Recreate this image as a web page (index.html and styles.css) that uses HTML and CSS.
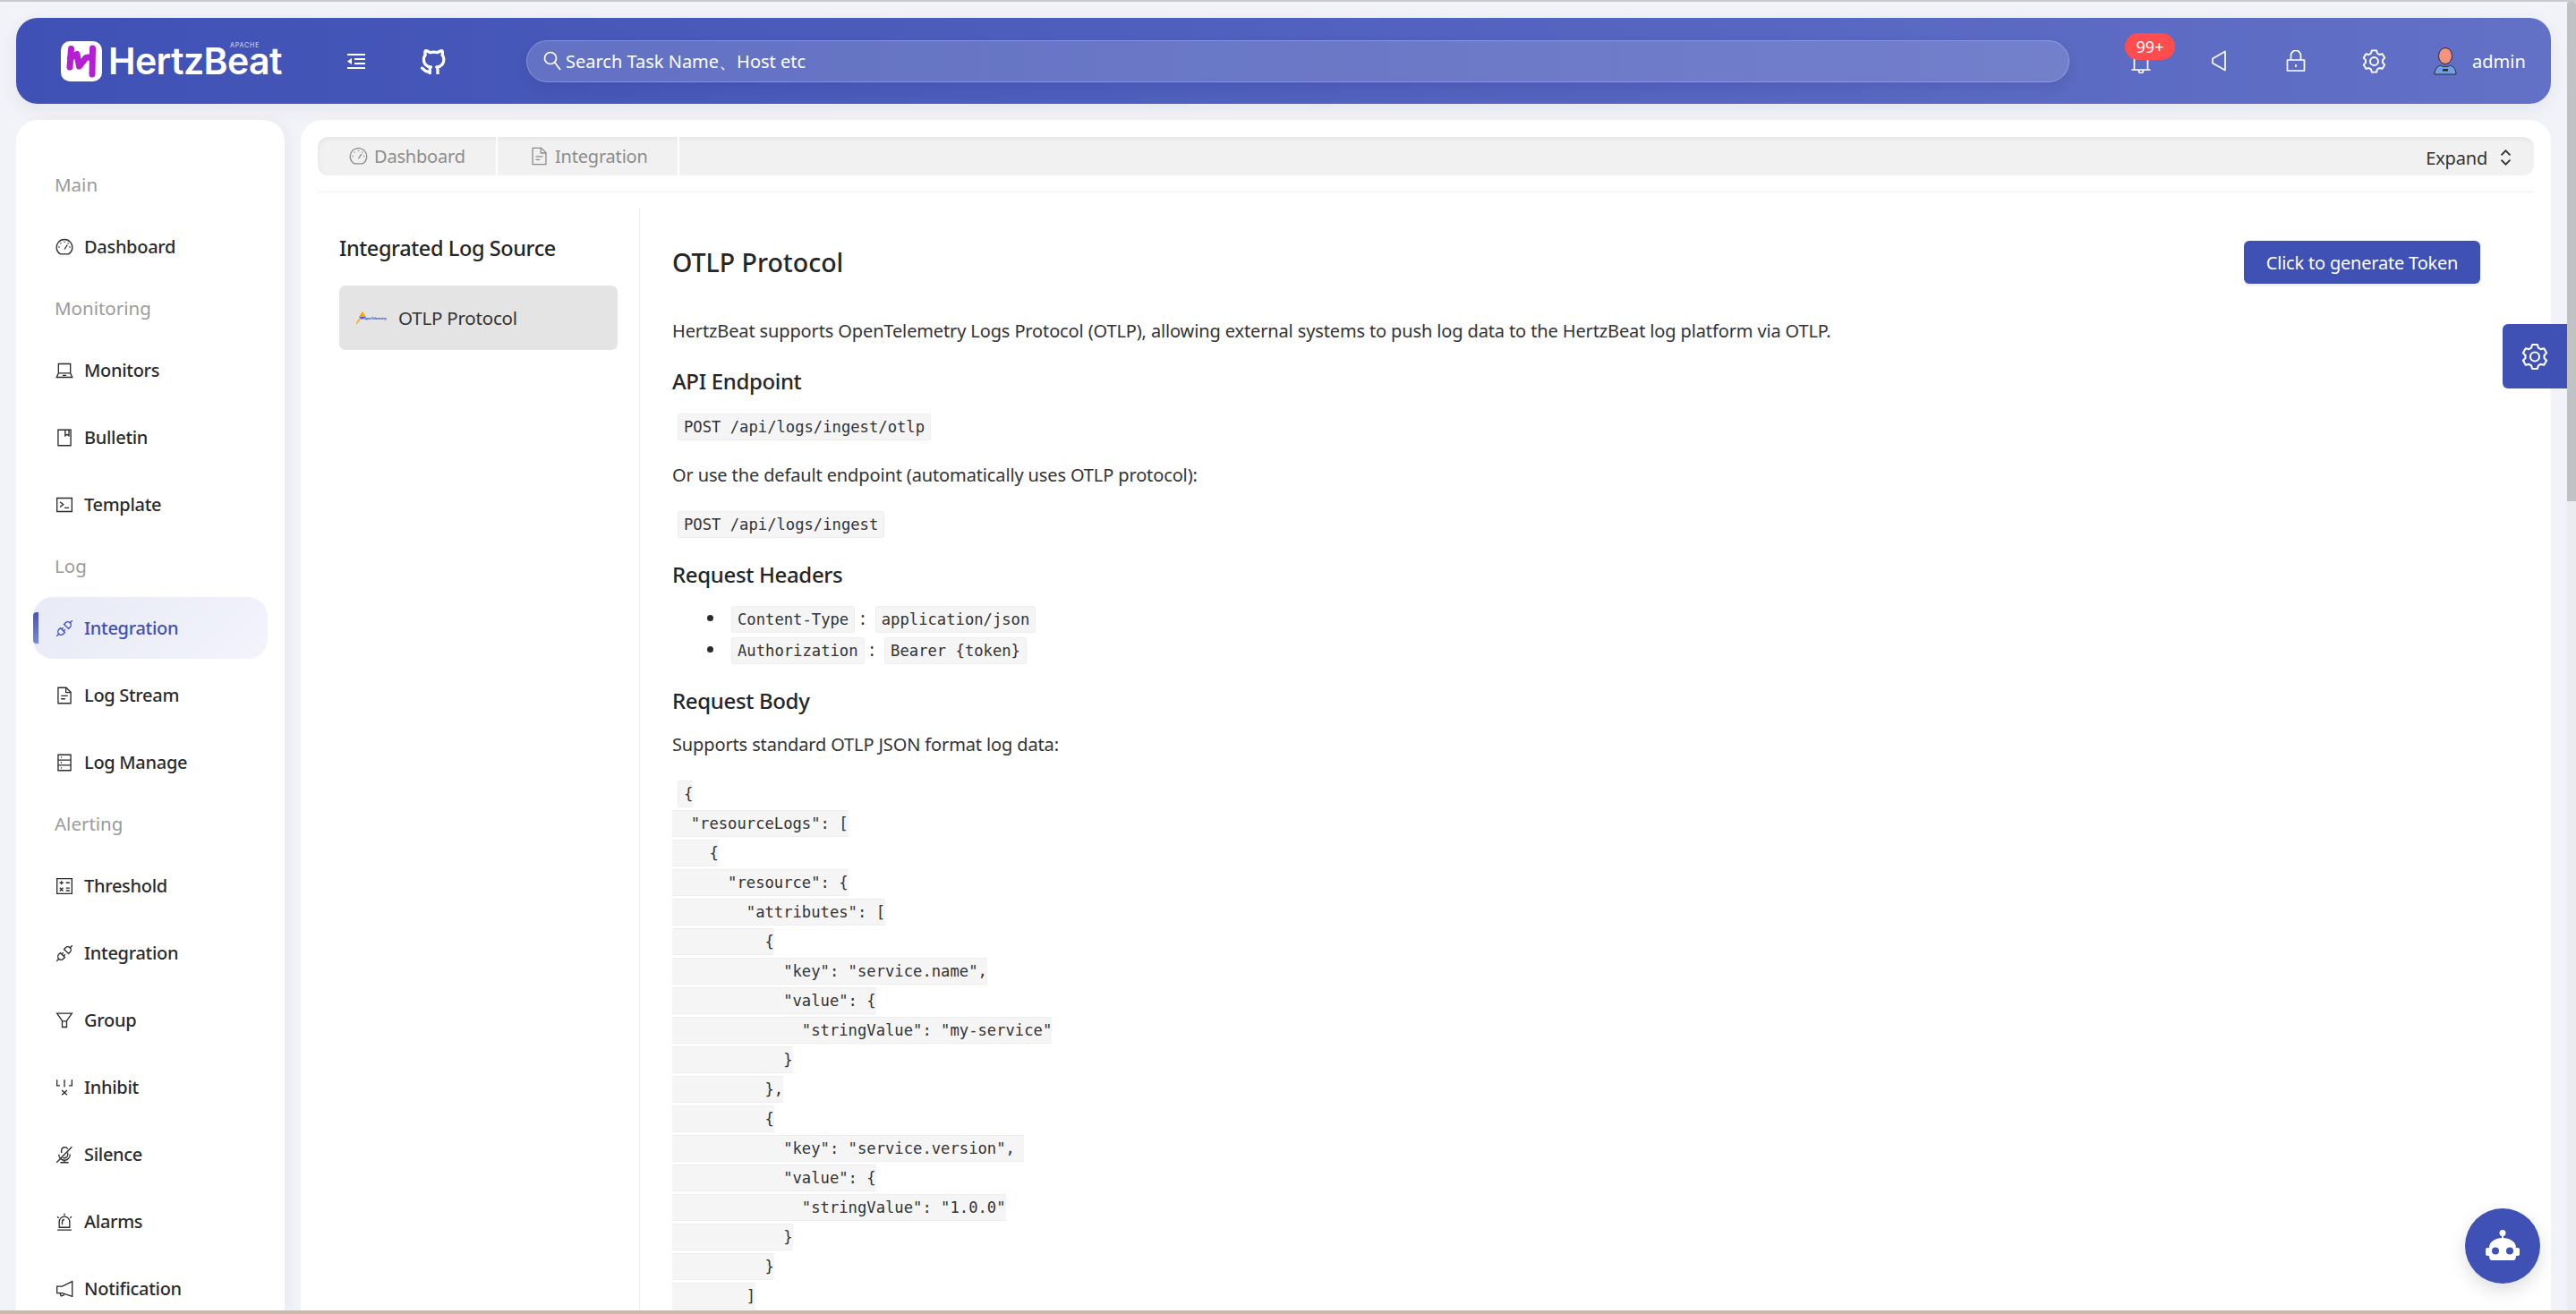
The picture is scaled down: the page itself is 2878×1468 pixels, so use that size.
FILE: index.html
```html
<!DOCTYPE html>
<html lang="en">
<head>
<meta charset="utf-8">
<title>HertzBeat</title>
<link rel="stylesheet" href="styles.css">
</head>
<body>
<svg class="sprite" xmlns="http://www.w3.org/2000/svg">
  <symbol id="i-dash" viewBox="0 0 24 24"><path d="M6.6 21.5A10.6 10.6 0 1 1 17.4 21.5Z"/><path d="M12 15l4-6M12 4.5v1.5M6.6 6.5l1 1M17.4 6.5l-1 1M4 12h1.5M20 12h-1.5"/></symbol>
  <symbol id="i-laptop" viewBox="0 0 24 24"><path d="M4 15.5V3h16v12.500M4 15.500h16l2.500 5.500H1.500z"/><path d="M9.500 18.500h5"/></symbol>
  <symbol id="i-book" viewBox="0 0 24 24"><path d="M3.500 1.500h17v21h-17z"/><path d="M13 1.500v8l2.500-2 2.500 2v-8"/></symbol>
  <symbol id="i-code" viewBox="0 0 24 24"><path d="M2 3h20v18H2z"/><path d="M6 8l4.500 3.500L6 15M12 16h6"/></symbol>
  <symbol id="i-plug" viewBox="0 0 24 24"><path d="M1.500 22.500l3.500-3.500M22.500 1.500L19 5"/><path d="M6.500 11.500l6 6-2 2a4.200 4.200 0 0 1-6-6z"/><path d="M11.500 6.500l6 6 2-2a4.200 4.200 0 0 0-6-6z"/><path d="M8.500 13l2-2M11 15.500l2-2"/></symbol>
  <symbol id="i-file" viewBox="0 0 24 24"><path d="M3.500 1.500h11l6 6v15h-17z"/><path d="M14 1.500v6.500h6.500M7.500 12.500h9M7.500 16.500h5.500"/></symbol>
  <symbol id="i-hdd" viewBox="0 0 24 24"><path d="M3.500 1.500h17v21h-17zM3.500 8.500h17M3.500 15.500h17"/><path d="M7 5h1.500M7 12h1.500M7 19h1.500"/></symbol>
  <symbol id="i-calc" viewBox="0 0 24 24"><path d="M2 2h20v20H2z"/><path d="M5.500 7.500h5M8 5v5M14 7.500h5M5.800 14l4.400 4.500M10.200 14l-4.400 4.500M14 14.500h5M14 18h5"/></symbol>
  <symbol id="i-funnel" viewBox="0 0 24 24"><path d="M2 2.500h20l-7 10v8.500H9v-8.500zM9 13h6"/></symbol>
  <symbol id="i-split" viewBox="0 0 24 24"><path d="M2 1.500v8h4M12 1.500v10M22 1.500v8h-4M8.500 15.500l7 6.500M15.500 15.500l-7 6.500"/></symbol>
  <symbol id="i-mute" viewBox="0 0 24 24"><path d="M8 9.500V6a4.500 4.500 0 0 1 8.500-1.500M16.500 9v3a4.500 4.500 0 0 1-6.500 4"/><path d="M4.500 11.500A7.500 7.500 0 0 0 12 19.500a7.500 7.500 0 0 0 7.500-8M12 19.500v3M6.500 22.500h11M1.500 22.500L22 1.500"/></symbol>
  <symbol id="i-alert" viewBox="0 0 24 24"><path d="M5 19.500V12a7 7 0 0 1 14 0v7.500zM2.500 23h19"/><path d="M12 1v2.500M2.500 5l2 1.800M21.500 5l-2 1.800M9 16v-4a3 3 0 0 1 3-3"/></symbol>
  <symbol id="i-notify" viewBox="0 0 24 24"><path d="M22.500 2v20L9 17.500H2v-9h7z"/><path d="M6 17.500l1.500 4 4.500-1.500"/></symbol>
  <symbol id="i-sound" viewBox="0 0 24 24"><path d="M19 1.500v21L5 14.500v-5z"/></symbol>
  <symbol id="i-lock" viewBox="0 0 24 24"><path d="M2.500 11h19v12h-19zM6.500 11V6a5.500 5.500 0 0 1 11 0v5"/><path d="M12 16v3"/></symbol>
  <symbol id="i-bell" viewBox="0 0 24 24"><path d="M4.500 20V8a7.500 7.500 0 0 1 15 0v12M1.500 20h21M9.500 20v1a2.500 2.500 0 0 0 5 0v-1"/></symbol>
  <symbol id="i-gear" viewBox="0 0 24 24"><polygon points="8.810,4.120 9.710,1.240 14.290,1.240 15.190,4.120 17.230,5.300 20.170,4.640 22.460,8.600 20.420,10.820 20.420,13.180 22.460,15.400 20.170,19.360 17.230,18.700 15.190,19.880 14.290,22.760 9.710,22.760 8.810,19.880 6.770,18.700 3.830,19.360 1.540,15.400 3.580,13.180 3.580,10.820 1.540,8.600 3.830,4.640 6.770,5.300"/><circle cx="12" cy="12" r="4"/></symbol>
</svg>

<div class="topline"></div>
<div class="window">
  <div class="app">
    <header class="header">
      <div class="brand">
        <svg class="logo-mark" viewBox="0 0 46 45"><rect width="46" height="45" rx="10" fill="#fff"/><path d="M11.500 8.500L10 29M10.500 19L18 14.500L20.500 28L28 18.500L35 17.500M35.500 8L35 37" fill="none" stroke="#b51fd4" stroke-width="7" stroke-linecap="round" stroke-linejoin="round"/></svg>
        <div class="logo-text"><span class="logo-apache">APACHE</span><span class="logo-name">HertzBeat</span></div>
      </div>
      <svg class="h-collapse" viewBox="0 0 20 17"><path d="M0 1h20M8 6h12M8 11h12M0 16h20" fill="none" stroke="#fff" stroke-width="1.800"/><path d="M5 5v7L0 8.500z" fill="#fff"/></svg>
      <svg class="h-github" viewBox="0 0 24 24"><path d="M9 21.500c-5 1.500-5-2.500-7-3m14 5.500v-3.870a3.370 3.370 0 0 0-.94-2.610c3.140-.35 6.440-1.540 6.440-7A5.440 5.440 0 0 0 20 6.770 5.070 5.070 0 0 0 19.910 3S18.730 2.650 16 4.480a13.380 13.380 0 0 0-7 0C6.270 2.650 5.090 3 5.090 3A5.070 5.070 0 0 0 5 6.770a5.440 5.440 0 0 0-1.500 3.780c0 5.420 3.300 6.610 6.440 7A3.370 3.370 0 0 0 9 20.130V24"/></svg>
      <div class="search">
        <svg class="search-ico" viewBox="0 0 20 24"><circle cx="8" cy="9" r="6.500"/><path d="M13 14l6 8"/></svg>
        <span class="search-text">Search Task Name、Host etc</span>
      </div>
      <div class="h-actions">
        <div class="h-bell">
          <svg class="h-ico bell-ico"><use href="#i-bell"/></svg>
          <span class="badge">99+</span>
        </div>
        <svg class="h-ico sound-ico"><use href="#i-sound"/></svg>
        <svg class="h-ico lock-ico"><use href="#i-lock"/></svg>
        <svg class="h-ico gear-ico"><use href="#i-gear"/></svg>
        <div class="user">
          <svg class="avatar" viewBox="0 0 26 31"><path d="M1 30c0-6 3-9 7-10 1 2 9 2 10 0 4 1 7 4 7 10z" fill="#6f9fe8" stroke="#2b2b2b"/><ellipse cx="13" cy="9.500" rx="7.500" ry="9" fill="#f6937f" stroke="#2b2b2b"/><rect x="10" y="24" width="6" height="2.500" fill="#2b2b2b"/></svg>
          <span class="user-name">admin</span>
        </div>
      </div>
    </header>

    <div class="body-row">
      <nav class="sidebar">
        <div class="nav-label">Main</div>
        <a class="nav-item"><svg class="nav-ico"><use href="#i-dash"/></svg><span>Dashboard</span></a>
        <div class="nav-label">Monitoring</div>
        <a class="nav-item"><svg class="nav-ico"><use href="#i-laptop"/></svg><span>Monitors</span></a>
        <a class="nav-item"><svg class="nav-ico"><use href="#i-book"/></svg><span>Bulletin</span></a>
        <a class="nav-item"><svg class="nav-ico"><use href="#i-code"/></svg><span>Template</span></a>
        <div class="nav-label">Log</div>
        <a class="nav-item active"><svg class="nav-ico"><use href="#i-plug"/></svg><span>Integration</span></a>
        <a class="nav-item"><svg class="nav-ico"><use href="#i-file"/></svg><span>Log Stream</span></a>
        <a class="nav-item"><svg class="nav-ico"><use href="#i-hdd"/></svg><span>Log Manage</span></a>
        <div class="nav-label">Alerting</div>
        <a class="nav-item"><svg class="nav-ico"><use href="#i-calc"/></svg><span>Threshold</span></a>
        <a class="nav-item"><svg class="nav-ico"><use href="#i-plug"/></svg><span>Integration</span></a>
        <a class="nav-item"><svg class="nav-ico"><use href="#i-funnel"/></svg><span>Group</span></a>
        <a class="nav-item"><svg class="nav-ico"><use href="#i-split"/></svg><span>Inhibit</span></a>
        <a class="nav-item"><svg class="nav-ico"><use href="#i-mute"/></svg><span>Silence</span></a>
        <a class="nav-item"><svg class="nav-ico"><use href="#i-alert"/></svg><span>Alarms</span></a>
        <a class="nav-item"><svg class="nav-ico"><use href="#i-notify"/></svg><span>Notification</span></a>
      </nav>

      <main class="panel">
        <div class="tabs-wrap">
          <div class="tabs">
            <div class="tab tab-a"><svg class="tab-ico"><use href="#i-dash"/></svg><span>Dashboard</span></div>
            <div class="tab tab-b"><svg class="tab-ico"><use href="#i-file"/></svg><span>Integration</span></div>
            <div class="expand"><span>Expand</span><svg class="expand-ico" viewBox="0 0 14 20"><path d="M1.500 7L7 1.500 12.500 7M1.500 13L7 18.500 12.500 13"/></svg></div>
          </div>
        </div>
        <div class="columns">
          <aside class="sources">
            <h3 class="sources-title">Integrated Log Source</h3>
            <div class="source-item">
              <svg class="otel" viewBox="0 0 34 14"><path d="M7 0l4 6H3z" fill="#f5a800"/><path d="M3 6h8l-5 3z" fill="#4f5fd0"/><path d="M4 8L0 14" stroke="#f5a800" stroke-width="1.500"/><text x="8" y="9" class="otel-text">OpenTelemetry</text></svg>
              <span>OTLP Protocol</span>
            </div>
          </aside>
          <article class="doc">
            <div class="doc-head">
              <h2 class="doc-title">OTLP Protocol</h2>
              <button class="token-btn">Click to generate Token</button>
            </div>
            <p class="lead">HertzBeat supports OpenTelemetry Logs Protocol (OTLP), allowing external systems to push log data to the HertzBeat log platform via OTLP.</p>
            <h4 class="sub sub-api">API Endpoint</h4>
            <p class="code-line code-1"><code>POST /api/logs/ingest/otlp</code></p>
            <p class="plain plain-or">Or use the default endpoint (automatically uses OTLP protocol):</p>
            <p class="code-line code-2"><code>POST /api/logs/ingest</code></p>
            <h4 class="sub sub-headers">Request Headers</h4>
            <ul class="headers">
              <li><code>Content-Type</code>: <code>application/json</code></li>
              <li><code>Authorization</code>: <code>Bearer {token}</code></li>
            </ul>
            <h4 class="sub sub-body">Request Body</h4>
            <p class="plain plain-body">Supports standard OTLP JSON format log data:</p>
<pre class="json"><code>{
  "resourceLogs": [
    {
      "resource": {
        "attributes": [
          {
            "key": "service.name",
            "value": {
              "stringValue": "my-service"
            }
          },
          {
            "key": "service.version", 
            "value": {
              "stringValue": "1.0.0"
            }
          }
        ]
 </code></pre>
          </article>
        </div>
      </main>
    </div>

    <button class="float-settings"><svg class="float-gear"><use href="#i-gear"/></svg></button>
    <button class="fab">
      <svg class="fab-ico" viewBox="0 0 40 38"><circle cx="20" cy="4.500" r="3.500" fill="#fff"/><path d="M19 6h2v6h-2z" fill="#fff"/><path d="M5 21C5 14 12 10 20 10s15 4 15 11h2a2 2 0 0 1 2 2v5a2 2 0 0 1-2 2h-2c0 3-1 5-3 5H8c-2 0-3-2-3-5H3a2 2 0 0 1-2-2v-5a2 2 0 0 1 2-2z" fill="#fff"/><circle cx="12" cy="24.500" r="4" fill="#3f51b5"/><circle cx="28" cy="24.500" r="4" fill="#3f51b5"/></svg>
    </button>
  </div>
  <div class="scrollbar"><div class="thumb"></div></div>
</div>
<div class="bottomline"></div>
</body>
</html>
```
FILE: styles.css
```css
* { box-sizing: border-box; }
html, body { margin: 0; height: 100%; }
body {
  display: flex;
  flex-direction: column;
  height: 100vh;
  overflow: hidden;
  background: #f2f3f8;
  color: #2b2b2b;
  font-family: "Noto Sans", "Open Sans", sans-serif;
  font-size: 20px;
}
.sprite { width: 0; height: 0; position: absolute; }
symbol { overflow: visible; }
.topline { height: 2px; background: #c9cacb; flex: none; }
.bottomline { height: 4px; background: #c9b8ac; flex: none; }
.window { flex: 1; display: flex; min-height: 0; }
.scrollbar { width: 10px; flex: none; background: #ebecf1; }
.thumb { height: 558px; background: #c1c2c4; border-radius: 3px 3px 0 0; }
.app { flex: 1; min-width: 0; position: relative; padding: 18px 18px 0; display: flex; flex-direction: column; overflow: hidden; }

/* header */
.header {
  height: 96px;
  flex: none;
  margin-bottom: 18px;
  border-radius: 24px;
  background: linear-gradient(90deg, #3f51b5 0%, #6270c6 100%);
  box-shadow: 0 6px 20px rgba(40, 50, 110, .07);
  display: flex;
  align-items: center;
  color: #fff;
  position: relative;
}
.brand { display: flex; align-items: center; margin-left: 50px; width: 320px; flex: none; }
.logo-mark { width: 46px; height: 45px; flex: none; }
.logo-text { position: relative; margin-left: 7px; height: 32px; }
.logo-name { display: block; font-family: Inter, sans-serif; font-weight: 600; font-size: 41px; line-height: 32px; letter-spacing: -.6px; }
.logo-apache { position: absolute; left: 136px; top: -6px; font-family: Inter, sans-serif; font-size: 7px; letter-spacing: .9px; line-height: 9px; color: #dfe2f5; }
.h-collapse { width: 20px; height: 17px; flex: none; margin-left: 0; }
.h-github { width: 30px; height: 30px; flex: none; margin-left: 61px; fill: none; stroke: #fff; stroke-width: 2.6; stroke-linecap: round; stroke-linejoin: round; }
.search {
  margin-left: 89px;
  width: 1724px;
  height: 47px;
  flex: none;
  border-radius: 24px;
  background: linear-gradient(90deg, rgba(255,255,255,.16), rgba(255,255,255,.14));
  border: 1px solid rgba(255,255,255,.22);
  box-shadow: 0 6px 14px rgba(30, 40, 100, .12);
  display: flex;
  align-items: center;
  padding-left: 18px;
}
.search-ico { width: 20px; height: 24px; fill: none; stroke: #fff; stroke-width: 1.7; flex: none; }
.search-text { margin-left: 5px; padding-top: 2px; font-size: 20px; color: #fff; }
.h-actions { position: absolute; left: 2356px; top: 0; height: 96px; width: 476px; display: flex; align-items: center; }
.h-ico { fill: none; stroke: #fff; stroke-width: 1.7; flex: none; stroke-linejoin: round; }
.h-bell { position: relative; width: 56px; height: 96px; flex: none; }
.bell-ico { position: absolute; left: 6px; top: 38px; width: 24px; height: 24px; }
.badge { position: absolute; left: 0; top: 17px; width: 56px; height: 30px; border-radius: 15px; background: #ff4d4f; color: #fff; font-size: 18px; line-height: 30px; text-align: center; }
.sound-ico { width: 26px; height: 24px; margin-left: 36px; }
.lock-ico { width: 24px; height: 24px; margin-left: 61px; }
.gear-ico { width: 27px; height: 27px; margin-left: 62px; }
.user { display: flex; align-items: center; margin-left: 53px; }
.avatar { width: 26px; height: 31px; flex: none; }
.user-name { margin-left: 17px; font-size: 20px; color: #fff; }

/* sidebar */
.body-row { flex: 1; display: flex; gap: 18px; min-height: 0; }
.sidebar {
  width: 300px;
  flex: none;
  background: #fff;
  border-radius: 24px 24px 0 0;
  padding-top: 44px;
  box-shadow: 6px 0 12px rgba(40, 45, 80, .035);
  overflow: hidden;
}
.nav-label { height: 57px; line-height: 57px; padding-left: 43px; color: #9a9a9a; font-size: 20.500px; }
.nav-item {
  height: 69px;
  margin: 6px 19px;
  padding-left: 25px;
  display: flex;
  align-items: center;
  gap: 12px;
  border-radius: 22px;
  font-size: 20px;
  letter-spacing: -.3px;
  font-weight: 500;
  color: #2b2b2b;
  position: relative;
}
.nav-ico { width: 20px; height: 20px; flex: none; fill: none; stroke: currentColor; stroke-width: 1.600; }
.nav-item.active { background: linear-gradient(135deg, #e8eaf6, #f2f3fb); color: #3f51b5; }
.nav-item.active::before {
  content: "";
  position: absolute;
  left: 0;
  top: 17px;
  width: 6px;
  height: 35px;
  background: linear-gradient(180deg, #4456b9, #7a88d2);
  border-radius: 4px 0 0 4px;
}

/* panel */
.panel {
  flex: 1;
  min-width: 0;
  background: #fff;
  border-radius: 24px 24px 0 0;
  padding: 19px 19px 0;
  display: flex;
  flex-direction: column;
  overflow: hidden;
}
.tabs-wrap { padding-bottom: 18px; border-bottom: 1px solid #eeeeee; flex: none; }
.tabs {
  height: 43px;
  display: flex;
  align-items: center;
  background: #f1f1f1;
  border-radius: 12px;
  box-shadow: inset 0 6px 8px -6px rgba(0, 0, 0, .08), inset 6px 0 8px -6px rgba(0, 0, 0, .05);
  color: #8c8c8c;
  font-size: 20px;
  letter-spacing: -.2px;
}
.tab { height: 100%; display: flex; align-items: center; border-right: 2px solid #fff; flex: none; gap: 7px; }
.tab-a { width: 201px; padding-left: 35px; }
.tab-b { width: 203px; padding-left: 36px; }
.tab-ico { width: 21px; height: 21px; fill: none; stroke: currentColor; stroke-width: 1.500; flex: none; }
.expand { margin-left: auto; display: flex; align-items: center; gap: 14px; color: #333; padding: 3px 25px 0 0; }
.expand-ico { width: 13px; height: 18px; fill: none; stroke: #333; stroke-width: 2; }

.columns { flex: 1; display: flex; min-height: 0; margin-top: 18px; }
.sources { width: 360px; flex: none; padding: 29px 24px 0; border-right: 1px solid #efefef; }
.sources-title { margin: 0 0 27px; font-size: 23.500px; line-height: 30px; letter-spacing: -.4px; font-weight: 500; color: #262626; }
.source-item { height: 72px; background: #e4e4e4; border-radius: 7px; display: flex; align-items: center; padding-left: 19px; gap: 13px; font-size: 20.500px; letter-spacing: -.2px; color: #333; }
.otel { width: 34px; height: 14px; flex: none; }
.otel-text { font-size: 3.700px; font-weight: 700; fill: #3f51c5; font-family: "Noto Sans", sans-serif; }

.doc { flex: 1; min-width: 0; padding: 36px 60px 0 36px; }
.doc-head { height: 48px; display: flex; align-items: center; justify-content: space-between; }
.doc-title { margin: 0; font-size: 28.500px; line-height: 36px; font-weight: 500; color: #262626; }
.token-btn {
  height: 48px;
  width: 264px;
  border: 0;
  border-radius: 6px;
  background: #3f51b5;
  color: #fff;
  font: inherit;
  font-size: 20px;
  letter-spacing: -.2px;
  box-shadow: 0 3px 0 #f3f3f3;
  padding: 0;
}
p { margin: 0; }
.lead, .plain { line-height: 30px; color: #333; font-size: 20px; letter-spacing: -.13px; }
.lead { margin-top: 38px; }
.sub { margin: 0; font-size: 24px; line-height: 32px; letter-spacing: -.35px; font-weight: 500; color: #262626; }
.sub-api { margin-top: 25px; }
.sub-headers { margin-top: 24px; }
.sub-body { margin-top: 24px; }
.code-line { line-height: 34px; }
.code-1 { margin-top: 17px; }
.code-2 { margin-top: 22px; }
.plain-or { margin-top: 23px; }
.plain-body { margin-top: 18px; }
code {
  font-family: "DejaVu Sans Mono", "Liberation Mono", monospace;
  font-size: 17.200px;
  line-height: 20px;
  background: #f5f5f5;
  border: 1px solid #eeeeee;
  border-radius: 3px;
  padding: 4px 6px;
  margin: 0 6px;
  color: #333;
}
.headers { margin: 15px 0 0; padding: 0 0 0 60px; line-height: 35px; }
.json { margin: 24px 0 0; font-family: "DejaVu Sans Mono", monospace; font-size: 17.200px; line-height: 33px; white-space: pre; }

/* floating */
.float-settings {
  position: absolute;
  right: 0;
  top: 360px;
  width: 72px;
  height: 72px;
  border: 0;
  border-radius: 6px 0 0 6px;
  background: #3f51b5;
  padding: 0;
  display: flex;
  align-items: center;
  justify-content: center;
}
.float-gear { width: 30px; height: 31px; fill: none; stroke: #fff; stroke-width: 1.700; stroke-linejoin: round; }
.fab {
  position: absolute;
  right: 30px;
  bottom: 30px;
  width: 84px;
  height: 84px;
  border: 0;
  border-radius: 50%;
  background: #3f51b5;
  box-shadow: 0 8px 20px rgba(0, 0, 0, .13);
  padding: 0;
  display: flex;
  align-items: center;
  justify-content: center;
}
.fab-ico { width: 40px; height: 38px; }
```
